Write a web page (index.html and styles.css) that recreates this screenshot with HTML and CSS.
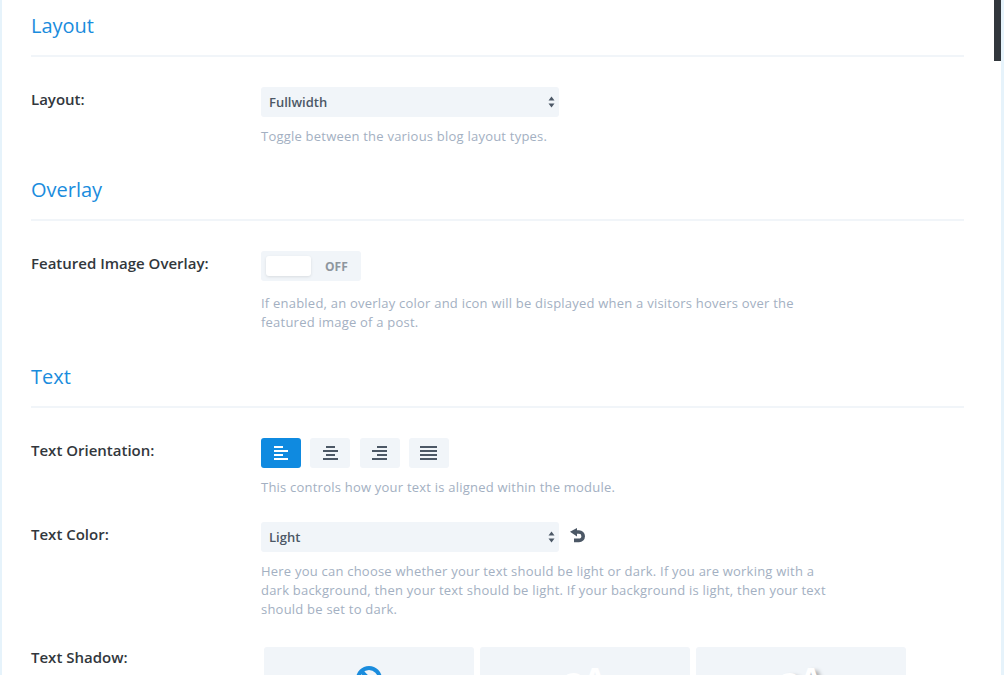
FILE: index.html
```html
<!DOCTYPE html>
<html lang="en">
  <head>
    <meta charset="UTF-8" />
    <title>Blog Settings</title>
    <link rel="stylesheet" href="styles.css">
  </head>
  <body>
    <div class="panel">
      <!-- Layout -->
      <h3 class="section-title">Layout</h3>
      <div class="row row-layout">
        <label class="row-label">Layout:</label>
        <div class="row-field">
          <div class="select">
            <span>Fullwidth</span>
            <svg class="select-arrows" width="7" height="12" viewBox="0 0 7 12"><path d="M3.5 0.5L6.5 4.5H0.5Z M3.5 11.5L0.5 7.5H6.5Z" /></svg>
          </div>
          <p class="help">Toggle between the various blog layout types.</p>
        </div>
      </div>

      <!-- Overlay -->
      <h3 class="section-title">Overlay</h3>
      <div class="row row-overlay">
        <label class="row-label">Featured Image Overlay:</label>
        <div class="row-field">
          <div class="toggle">
            <span class="toggle-knob"></span>
            <span class="toggle-text">OFF</span>
          </div>
          <p class="help help-wide help-toggle">If enabled, an overlay color and icon will be displayed when a visitors hovers over the featured image of a post.</p>
        </div>
      </div>

      <!-- Text -->
      <h3 class="section-title">Text</h3>
      <div class="row row-orientation">
        <label class="row-label">Text Orientation:</label>
        <div class="row-field">
          <div class="align-btns">
            <button class="align-btn active">
              <svg width="15" height="14" viewBox="0 0 15 14"><path d="M0 0h9v2H0zM0 4h14v2H0zM0 8h9v2H0zM0 12h14v2H0z" /></svg>
            </button>
            <button class="align-btn">
              <svg width="15" height="14" viewBox="0 0 15 14"><path d="M3 0h9v2H3zM0 4h15v2H0zM3 8h9v2H3zM0 12h15v2H0z" /></svg>
            </button>
            <button class="align-btn">
              <svg width="15" height="14" viewBox="0 0 15 14"><path d="M5 0h10v2H5zM0 4h15v2H0zM5 8h10v2H5zM0 12h15v2H0z" /></svg>
            </button>
            <button class="align-btn">
              <svg width="17" height="14" viewBox="0 0 17 14"><path d="M0 0h17v2H0zM0 4h17v2H0zM0 8h17v2H0zM0 12h17v2H0z" /></svg>
            </button>
          </div>
          <p class="help">This controls how your text is aligned within the module.</p>
        </div>
      </div>

      <div class="row row-color">
        <label class="row-label">Text Color:</label>
        <div class="row-field">
          <div class="select-line">
            <div class="select">
              <span>Light</span>
              <svg class="select-arrows" width="7" height="12" viewBox="0 0 7 12"><path d="M3.5 0.5L6.5 4.5H0.5Z M3.5 11.5L0.5 7.5H6.5Z" /></svg>
            </div>
            <svg class="reset-icon" width="15" height="15" viewBox="0 0 15 15"><path class="reset-arc" d="M5 4H9A3.9 3.9 0 0 1 9 12.4H4" /><path d="M0 3.8L7 0V8.4Z" /></svg>
          </div>
          <p class="help help-wide">Here you can choose whether your text should be light or dark. If you are working with a dark background, then your text should be light. If your background is light, then your text should be set to dark.</p>
        </div>
      </div>

      <div class="row row-shadow">
        <label class="row-label">Text Shadow:</label>
        <div class="shadow-cards">
          <div class="shadow-card">
            <svg class="none-icon" width="26" height="26" viewBox="0 0 26 26"><circle cx="13" cy="13" r="11" /><path d="M5 5L21 21" /></svg>
          </div>
          <div class="shadow-card"><span class="shadow-a">aA</span></div>
          <div class="shadow-card"><span class="shadow-a shadow-a-drop">aA</span></div>
        </div>
      </div>
    </div>

    <div class="scrollbar"></div>
  </body>
</html>
```

FILE: styles.css
```css
* {
  box-sizing: border-box;
}

html,
body {
  height: 675px;
  overflow: hidden;
}

body {
  margin: 0;
  background: #fff;
  font-family: "Open Sans", sans-serif;
  color: #32373c;
  position: relative;
}

.panel {
  width: 1001px;
  height: 675px;
  overflow: hidden;
  padding: 0 37px 0 31px;
  background: #fff;
  box-shadow: inset 2px 0 0 #e6f3fb;
}

.section-title {
  margin: 0;
  height: 45px;
  font-size: 20px;
  line-height: 27px;
  font-weight: 400;
  color: #1a8cdd;
  border-bottom: 2px solid #f1f5f9;
}

.section-title:first-child {
  margin-top: 12px;
}

.row {
  display: flex;
}

.row-label {
  width: 230px;
  flex: none;
  font-size: 15px;
  line-height: 19px;
  font-weight: 600;
  color: #32373c;
  padding-top: 3px;
}

.row-layout {
  margin-top: 30px;
  margin-bottom: 30px;
}

.row-overlay {
  margin-top: 30px;
  margin-bottom: 31px;
}

.row-orientation {
  margin-top: 30px;
  margin-bottom: 25px;
}

.row-color {
  margin-bottom: 28px;
}

.row-shadow .row-label {
  padding-top: 1px;
}

.row-field {
  flex: 1;
}

.select {
  width: 298px;
  height: 30px;
  padding: 0 4px 0 8px;
  display: flex;
  align-items: center;
  justify-content: space-between;
  background: #f1f5f9;
  border-radius: 3px;
  font-size: 13px;
  font-weight: 600;
  color: #4c5866;
}

.select-arrows {
  fill: #4c5866;
}

.select-line {
  display: flex;
  align-items: flex-start;
  gap: 11px;
}

.reset-icon {
  fill: #4c5866;
  margin-top: 6px;
}

.reset-arc {
  fill: none;
  stroke: #4c5866;
  stroke-width: 3.6;
}

.help {
  margin: 10px 0 0;
  font-size: 13px;
  line-height: 19px;
  font-weight: 400;
  letter-spacing: 0.22px;
  color: #a3b0c2;
}

.help-wide {
  max-width: 570px;
}

.help-toggle {
  margin-top: 13px;
}

.toggle {
  width: 100px;
  height: 30px;
  padding: 5px;
  display: flex;
  align-items: center;
  background: #f1f5f9;
  border-radius: 3px;
}

.toggle-knob {
  width: 45px;
  height: 20px;
  background: #fff;
  border-radius: 3px;
  box-shadow: 0 1px 3px rgba(0, 0, 0, 0.1);
}

.toggle-text {
  margin-left: 14px;
  font-size: 12px;
  font-weight: 700;
  color: #8e969e;
}

.align-btns {
  display: flex;
  gap: 9.33px;
}

.align-btn {
  width: 40px;
  height: 30px;
  padding: 0;
  border: 0;
  border-radius: 3px;
  display: flex;
  align-items: center;
  justify-content: center;
  background: #f1f5f9;
  fill: #4c5866;
}

.align-btn.active {
  background: #0f8ae0;
  fill: #fff;
}

.shadow-cards {
  flex: none;
  display: flex;
  gap: 6px;
  margin-left: 3px;
}

.shadow-card {
  width: 210px;
  height: 120px;
  display: flex;
  justify-content: center;
  background: #f1f5f9;
  border-radius: 3px;
}

.none-icon {
  margin-top: 19px;
  fill: none;
  stroke: #1a8cdd;
  stroke-width: 4;
}

.shadow-a {
  margin-top: 12px;
  font-size: 33px;
  line-height: 40px;
  font-weight: 700;
  color: #fff;
}

.shadow-a-drop {
  text-shadow: 4px 3px 4px rgba(0, 0, 0, 0.35);
}

.scrollbar {
  position: absolute;
  top: 0;
  left: 994px;
  width: 7px;
  height: 61px;
  background: #32373c;
}

body::after {
  content: "";
  position: absolute;
  top: 0;
  right: 0;
  bottom: 0;
  width: 3px;
  background: #e6f3fb;
}
```
